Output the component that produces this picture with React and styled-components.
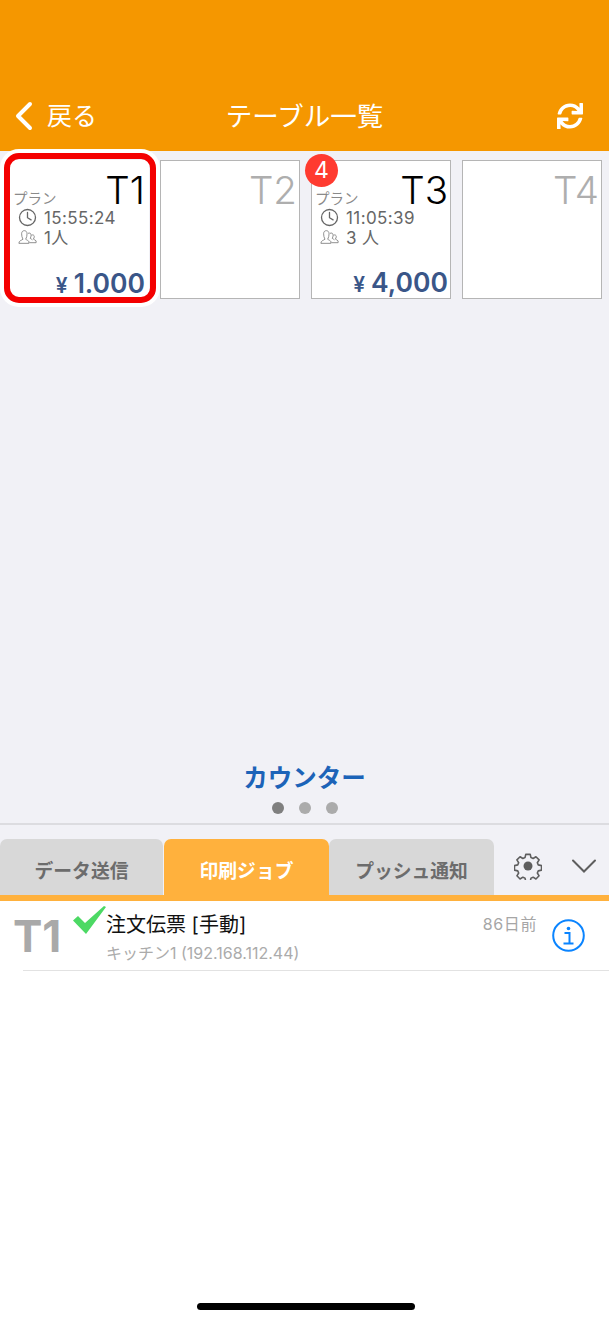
import styled, { createGlobalStyle } from "styled-components"
import { FaSync } from "react-icons/fa"

const GlobalStyle = createGlobalStyle`
html, body {
  margin: 0;
  padding: 0;
  background: #fff;
}
* { box-sizing: border-box; }
body {
  font-family: Inter, "Noto Sans CJK JP", sans-serif;
}
`

const Page = styled.div`
  width: 609px;
  height: 1321px;
  display: flex;
  flex-direction: column;
  position: relative;
  overflow: hidden;
`
const Header = styled.header`
  height: 151px;
  flex: none;
  background: #f59700;
  color: #fff;
  display: flex;
  align-items: flex-start;
  justify-content: space-between;
  padding: 99px 26px 0 14px;
`
const BackLink = styled.div`
  display: flex;
  align-items: center;
  gap: 14px;
  font-size: 25px;
  line-height: 34px;
  width: 120px;
`
const Title = styled.div`
  font-size: 26.5px;
  line-height: 34px;
`
const Refresh = styled.div`
  width: 108px;
  height: 34px;
  display: flex;
  align-items: center;
  justify-content: flex-end;
`
const Main = styled.main`
  height: 674px;
  flex: none;
  background: #f1f1f6;
  border-bottom: 2px solid #dcdce0;
  display: flex;
  flex-direction: column;
  align-items: center;
`
const Tables = styled.div`
  width: 100%;
  flex: 1;
  display: grid;
  grid-template-columns: repeat(4, 140px);
  grid-auto-rows: 139px;
  column-gap: 11px;
  padding: 9px 0 0 9px;
`
const Card = styled.div`
  position: relative;
  background: #fff;
  border: ${p => (p.$selected ? "none" : "1px solid #b5b5b5")};
  padding: ${p => (p.$selected ? "12px 4px 0 4px" : "11px 2px 0 3px")};
  display: flex;
  flex-direction: column;
  ${p => p.$selected && `
    &::before {
      content: "";
      position: absolute;
      inset: -7px -7px -4px -5px;
      border: 6px solid #f40000;
      border-radius: 15px;
      box-shadow: 0 0 0 4px #fff;
    }
  `}
`
const TableName = styled.div`
  font-size: 38.5px;
  line-height: 37px;
  font-weight: 300;
  text-align: right;
  color: ${p => (p.$active ? "#000" : "#aeaeae")};
`
const Badge = styled.div`
  position: absolute;
  top: -7px;
  left: -7px;
  width: 33px;
  height: 33px;
  border-radius: 50%;
  background: #ff3b30;
  color: #fff;
  font-size: 23px;
  line-height: 33px;
  text-align: center;
`
const Plan = styled.div`
  margin-top: -19px;
  font-size: 14.5px;
  line-height: 18px;
  color: #8a8a8a;
`
const InfoRow = styled.div`
  display: flex;
  align-items: center;
  gap: 7px;
  padding-left: 5px;
  height: 19px;
  font-size: 17px;
  color: #666;
  letter-spacing: 0.4px;
`
const IconBox = styled.span`
  width: 19px;
  display: flex;
  justify-content: center;
  flex: none;
`
const Price = styled.div`
  margin-top: auto;
  margin-bottom: -3px;
  display: flex;
  align-items: baseline;
  justify-content: flex-end;
  color: #3a5688;
  font-size: 26.5px;
  line-height: 32px;
  font-weight: 600;
`
const Yen = styled.span`
  font-size: 21px;
  margin-right: 6px;
`
const PageName = styled.div`
  color: #1c63b8;
  font-size: 24.5px;
  font-weight: 700;
  line-height: 34px;
`
const Dots = styled.div`
  display: flex;
  gap: 15px;
  margin: 7px 0 9px;
`
const Dot = styled.span`
  width: 12px;
  height: 12px;
  border-radius: 50%;
  background: ${p => (p.$on ? "#7f7f7f" : "#ababab")};
`
const TabBar = styled.div`
  height: 76px;
  flex: none;
  background: #f1f1f6;
  padding-top: 14px;
  display: flex;
  border-bottom: 6px solid #ffb13d;
`
const Tab = styled.div`
  width: ${p => p.$w}px;
  margin-right: ${p => (p.$active ? 0 : 1)}px;
  border-radius: 7px 7px 0 0;
  background: ${p => (p.$active ? "#ffb13d" : "#d8d8d8")};
  color: ${p => (p.$active ? "#fff" : "#6c6c6c")};
  font-size: 18.8px;
  font-weight: 700;
  display: flex;
  align-items: center;
  justify-content: center;
  padding-top: 4px;
`
const TabIcon = styled.div`
  width: ${p => p.$w}px;
  display: flex;
  align-items: center;
  justify-content: center;
  padding-bottom: 2px;
`
const JobList = styled.div`
  flex: 1;
  background: #fff;
`
const JobRow = styled.div`
  height: 70px;
  margin-left: 23px;
  border-bottom: 1px solid #e2e2e2;
  display: flex;
  position: relative;
`
const JobTable = styled.div`
  margin-left: -10px;
  width: 60px;
  padding-top: 12px;
  font-size: 44px;
  line-height: 46px;
  font-weight: 700;
  color: #a9a9a9;
`
const Check = styled.svg`
  margin-top: 5px;
  flex: none;
`
const JobText = styled.div`
  flex: 1;
`
const JobName = styled.div`
  padding-top: 9px;
  font-size: 20px;
  line-height: 30px;
  color: #111;
`
const JobPrinter = styled.div`
  font-size: 16px;
  line-height: 24px;
  margin-top: 1px;
  color: #ababab;
`
const JobTime = styled.div`
  padding-top: 11px;
  font-size: 16px;
  line-height: 24px;
  color: #a6a6a6;
  letter-spacing: 0.6px;
`
const InfoButton = styled.div`
  width: 72px;
  padding: 18px 0 0 15px;
`
const HomeBar = styled.div`
  position: absolute;
  left: 197px;
  bottom: 11px;
  width: 218px;
  height: 7px;
  border-radius: 4px;
  background: #000;
`

const Clock = () => (
  <svg width="19" height="19" viewBox="0 0 19 19" fill="none" stroke="#666" strokeWidth="1.3" strokeLinecap="round">
    <circle cx="9.5" cy="9.5" r="8" />
    <path d="M9.5 4.5v5.2l3.6 2.2" />
  </svg>
)

const People = () => (
  <svg width="21" height="16" viewBox="0 0 21 16" fill="none" stroke="#777" strokeWidth="0.9">
    <path d="M1 15c0-3 2.500-3 4.500-4.500C4.500 8.500 4 7 4 4.500 4 2 5.500 1 7 1s3 1 3 3.500c0 2.500-.5 4-1.500 6 1.500 1 3 1.500 3.500 2.500v2z" />
    <path d="M11 4c2-1 3.500 0 3.500 2 0 1.500-.5 2.500-1 3.500 1 .7 1.800 1 2.500 1.700" />
    <path d="M15 6c1.500-.8 3 0 3 1.500 0 1.200-.5 2-1 2.800 1 .7 2 1 3 2v2h-7.500" />
  </svg>
)

const Gear = () => (
  <svg width="28" height="28" viewBox="0 0 30 30" fill="none" stroke="#5e5e5e" strokeWidth="1.7" strokeLinejoin="round">
    <path d="M12.600 2.500h4.800l.8 3.500 2.300 1 3-1.900 3.400 3.400-1.900 3 1 2.300 3.500.8v4.800l-3.500.8-1 2.300 1.900 3-3.400 3.400-3-1.900-2.300 1-.8 3.500h-4.800l-.8-3.500-2.300-1-3 1.900-3.400-3.400 1.900-3-1-2.300-3.500-.8v-4.800l3.500-.8 1-2.300-1.900-3 3.400-3.400 3 1.900 2.300-1z" />
    <circle cx="15" cy="15" r="4.800" fill="#5e5e5e" stroke="none" />
  </svg>
)

const tables = [
  { name: "T1", selected: true, time: "15:55:24", guests: "1人", price: "1.000" },
  { name: "T2" },
  { name: "T3", badge: 4, time: "11:05:39", guests: "3 人", price: "4,000" },
  { name: "T4" },
]

const App = () => {
  return (
    <Page>
      <GlobalStyle />
      <Header>
        <BackLink>
          <svg width="19" height="30" viewBox="0 0 19 30" fill="none" stroke="#fff" strokeWidth="4" strokeLinecap="round" strokeLinejoin="round">
            <path d="M16 3 4 15l12 12" />
          </svg>
          戻る
        </BackLink>
        <Title>テーブル一覧</Title>
        <Refresh>
          <FaSync size={26} color="#fff" />
        </Refresh>
      </Header>
      <Main>
        <Tables>
          {tables.map(t => (
            <Card key={t.name} $selected={t.selected}>
              {t.badge && <Badge>{t.badge}</Badge>}
              <TableName $active={!!t.time}>{t.name}</TableName>
              {t.time && (
                <>
                  <Plan>プラン</Plan>
                  <InfoRow>
                    <IconBox><Clock /></IconBox>
                    {t.time}
                  </InfoRow>
                  <InfoRow>
                    <IconBox><People /></IconBox>
                    {t.guests}
                  </InfoRow>
                  <Price>
                    <Yen>¥</Yen>
                    {t.price}
                  </Price>
                </>
              )}
            </Card>
          ))}
        </Tables>
        <PageName>カウンター</PageName>
        <Dots>
          <Dot $on />
          <Dot />
          <Dot />
        </Dots>
      </Main>
      <TabBar>
        <Tab $w={163}>データ送信</Tab>
        <Tab $w={165} $active>印刷ジョブ</Tab>
        <Tab $w={165}>プッシュ通知</Tab>
        <TabIcon $w={66}><Gear /></TabIcon>
        <TabIcon $w={46}>
          <svg width="26" height="16" viewBox="0 0 26 16" fill="none" stroke="#5e5e5e" strokeWidth="2" strokeLinecap="round">
            <path d="M2 2.500 13 13.500 24 2.500" />
          </svg>
        </TabIcon>
      </TabBar>
      <JobList>
        <JobRow>
          <JobTable>T1</JobTable>
          <Check width="33" height="28" viewBox="0 0 33 28">
            <path d="M0 14.500 5 10l7 7L31 0l2 1-20 27z" fill="#4cd964" />
          </Check>
          <JobText>
            <JobName>注文伝票 [手動]</JobName>
            <JobPrinter>キッチン1 (192.168.112.44)</JobPrinter>
          </JobText>
          <JobTime>86日前</JobTime>
          <InfoButton>
            <svg width="33" height="33" viewBox="0 0 33 33" fill="none">
              <circle cx="16.500" cy="16.500" r="15.300" stroke="#0a84ff" strokeWidth="2" />
              <circle cx="16.500" cy="9.500" r="1.800" fill="#0a84ff" />
              <path d="M12.500 14h5v10.500M11.500 24.500h10" stroke="#0a84ff" strokeWidth="2" />
            </svg>
          </InfoButton>
        </JobRow>
      </JobList>
      <HomeBar />
    </Page>
  )
}

export default App
